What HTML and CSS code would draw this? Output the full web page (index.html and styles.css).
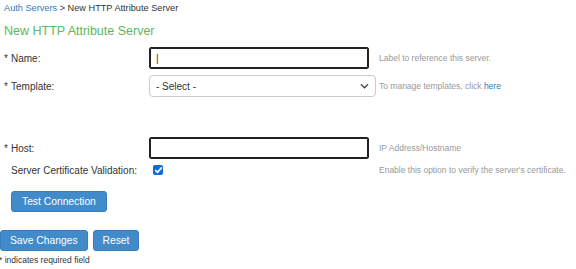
FILE: index.html
```
<!DOCTYPE html>
<html lang="en">
<head>
    <meta charset="UTF-8">
    <title>New HTTP Attribute Server</title>
    <link rel="stylesheet" href="styles.css">
</head>
<body>
    <div class="breadcrumb"><a href="#">Auth Servers</a> &gt; New HTTP Attribute Server</div>
    <h1>New HTTP Attribute Server</h1>

    <div class="form">
        <div class="row">
            <label class="lbl"><span class="req">*</span>Name:</label>
            <div class="field"><input type="text" class="txt focused" value="|"></div>
            <div class="hint">Label to reference this server.</div>
        </div>
        <div class="row">
            <label class="lbl"><span class="req">*</span>Template:</label>
            <div class="field">
                <div class="select">
                    <span>- Select -</span>
                    <svg width="9" height="6" viewBox="0 0 10 6"><path d="M1 1 L5 5 L9 1" fill="none" stroke="#444" stroke-width="1.4"/></svg>
                </div>
            </div>
            <div class="hint">To manage templates, click <a href="#">here</a></div>
        </div>
        <div class="spacer"></div>
        <div class="row">
            <label class="lbl"><span class="req">*</span>Host:</label>
            <div class="field"><input type="text" class="txt"></div>
            <div class="hint">IP Address/Hostname</div>
        </div>
        <div class="row short">
            <label class="lbl"><span class="req"></span>Server Certificate Validation:</label>
            <div class="field">
                <span class="check">
                    <svg width="9" height="8" viewBox="0 0 9 8"><path d="M1.2 4.2 L3.5 6.3 L7.8 1.4" fill="none" stroke="#fff" stroke-width="1.6"/></svg>
                </span>
            </div>
            <div class="hint">Enable this option to verify the server's certificate.</div>
        </div>
        <div class="test">
            <button class="btn">Test Connection</button>
        </div>
    </div>

    <div class="actions">
        <button class="btn">Save Changes</button>
        <button class="btn">Reset</button>
    </div>
    <div class="note"><span class="star">*</span> indicates required field</div>
</body>
</html>
```

FILE: styles.css
```
* {
    margin: 0;
    padding: 0;
    box-sizing: border-box;
}

body {
    font-family: 'Liberation Sans', Arial, sans-serif;
    color: #333;
    background: #fff;
    padding: 2px 0 0 4px;
    font-size: 10px;
}

a {
    color: #337ab7;
    text-decoration: none;
}

.breadcrumb {
    font-size: 9.2px;
    color: #333;
    line-height: 12px;
}

h1 {
    font-size: 12.5px;
    font-weight: normal;
    color: #5cb85c;
    margin-top: 9px;
    line-height: 16px;
}

.form {
    margin-top: 5px;
}

.row {
    display: flex;
    align-items: center;
    height: 28px;
}

.row.short {
    height: 16px;
}

.lbl {
    width: 145px;
    font-size: 10px;
    color: #333;
    white-space: nowrap;
}

.req {
    display: inline-block;
    width: 7px;
}

.field {
    width: 230px;
}

.txt {
    width: 220px;
    height: 22px;
    border: 1px solid #222;
    border-radius: 2px;
    box-shadow: inset 0 0 0 1px #222;
    font-family: 'Liberation Sans', Arial, sans-serif;
    font-size: 10px;
    padding: 0 6px;
    color: #333;
    outline: none;
}

.select {
    width: 227px;
    height: 22px;
    border: 1px solid #ccc;
    border-radius: 4px;
    display: flex;
    align-items: center;
    justify-content: space-between;
    padding: 0 6px;
    font-size: 10px;
    color: #333;
}

.hint {
    font-size: 8.5px;
    color: #999;
}

.spacer {
    height: 34px;
}

.check {
    display: inline-flex;
    align-items: center;
    justify-content: center;
    width: 10px;
    height: 10px;
    background: #0b6dd8;
    border-radius: 2px;
    margin-left: 4px;
}

.test {
    padding: 13px 0 0 7px;
}

.btn {
    background: #428bca;
    color: #fff;
    border: 1px solid #357ebd;
    border-radius: 3px;
    font-family: 'Liberation Sans', Arial, sans-serif;
    font-size: 10.3px;
    height: 21px;
    padding: 0 9px;
}

.test .btn {
    padding: 0 10px;
}

.actions {
    display: flex;
    gap: 5px;
    margin: 18px 0 0 -4px;
}

.note {
    font-size: 8.5px;
    color: #333;
    margin: 4px 0 0 -5px;
}
```
